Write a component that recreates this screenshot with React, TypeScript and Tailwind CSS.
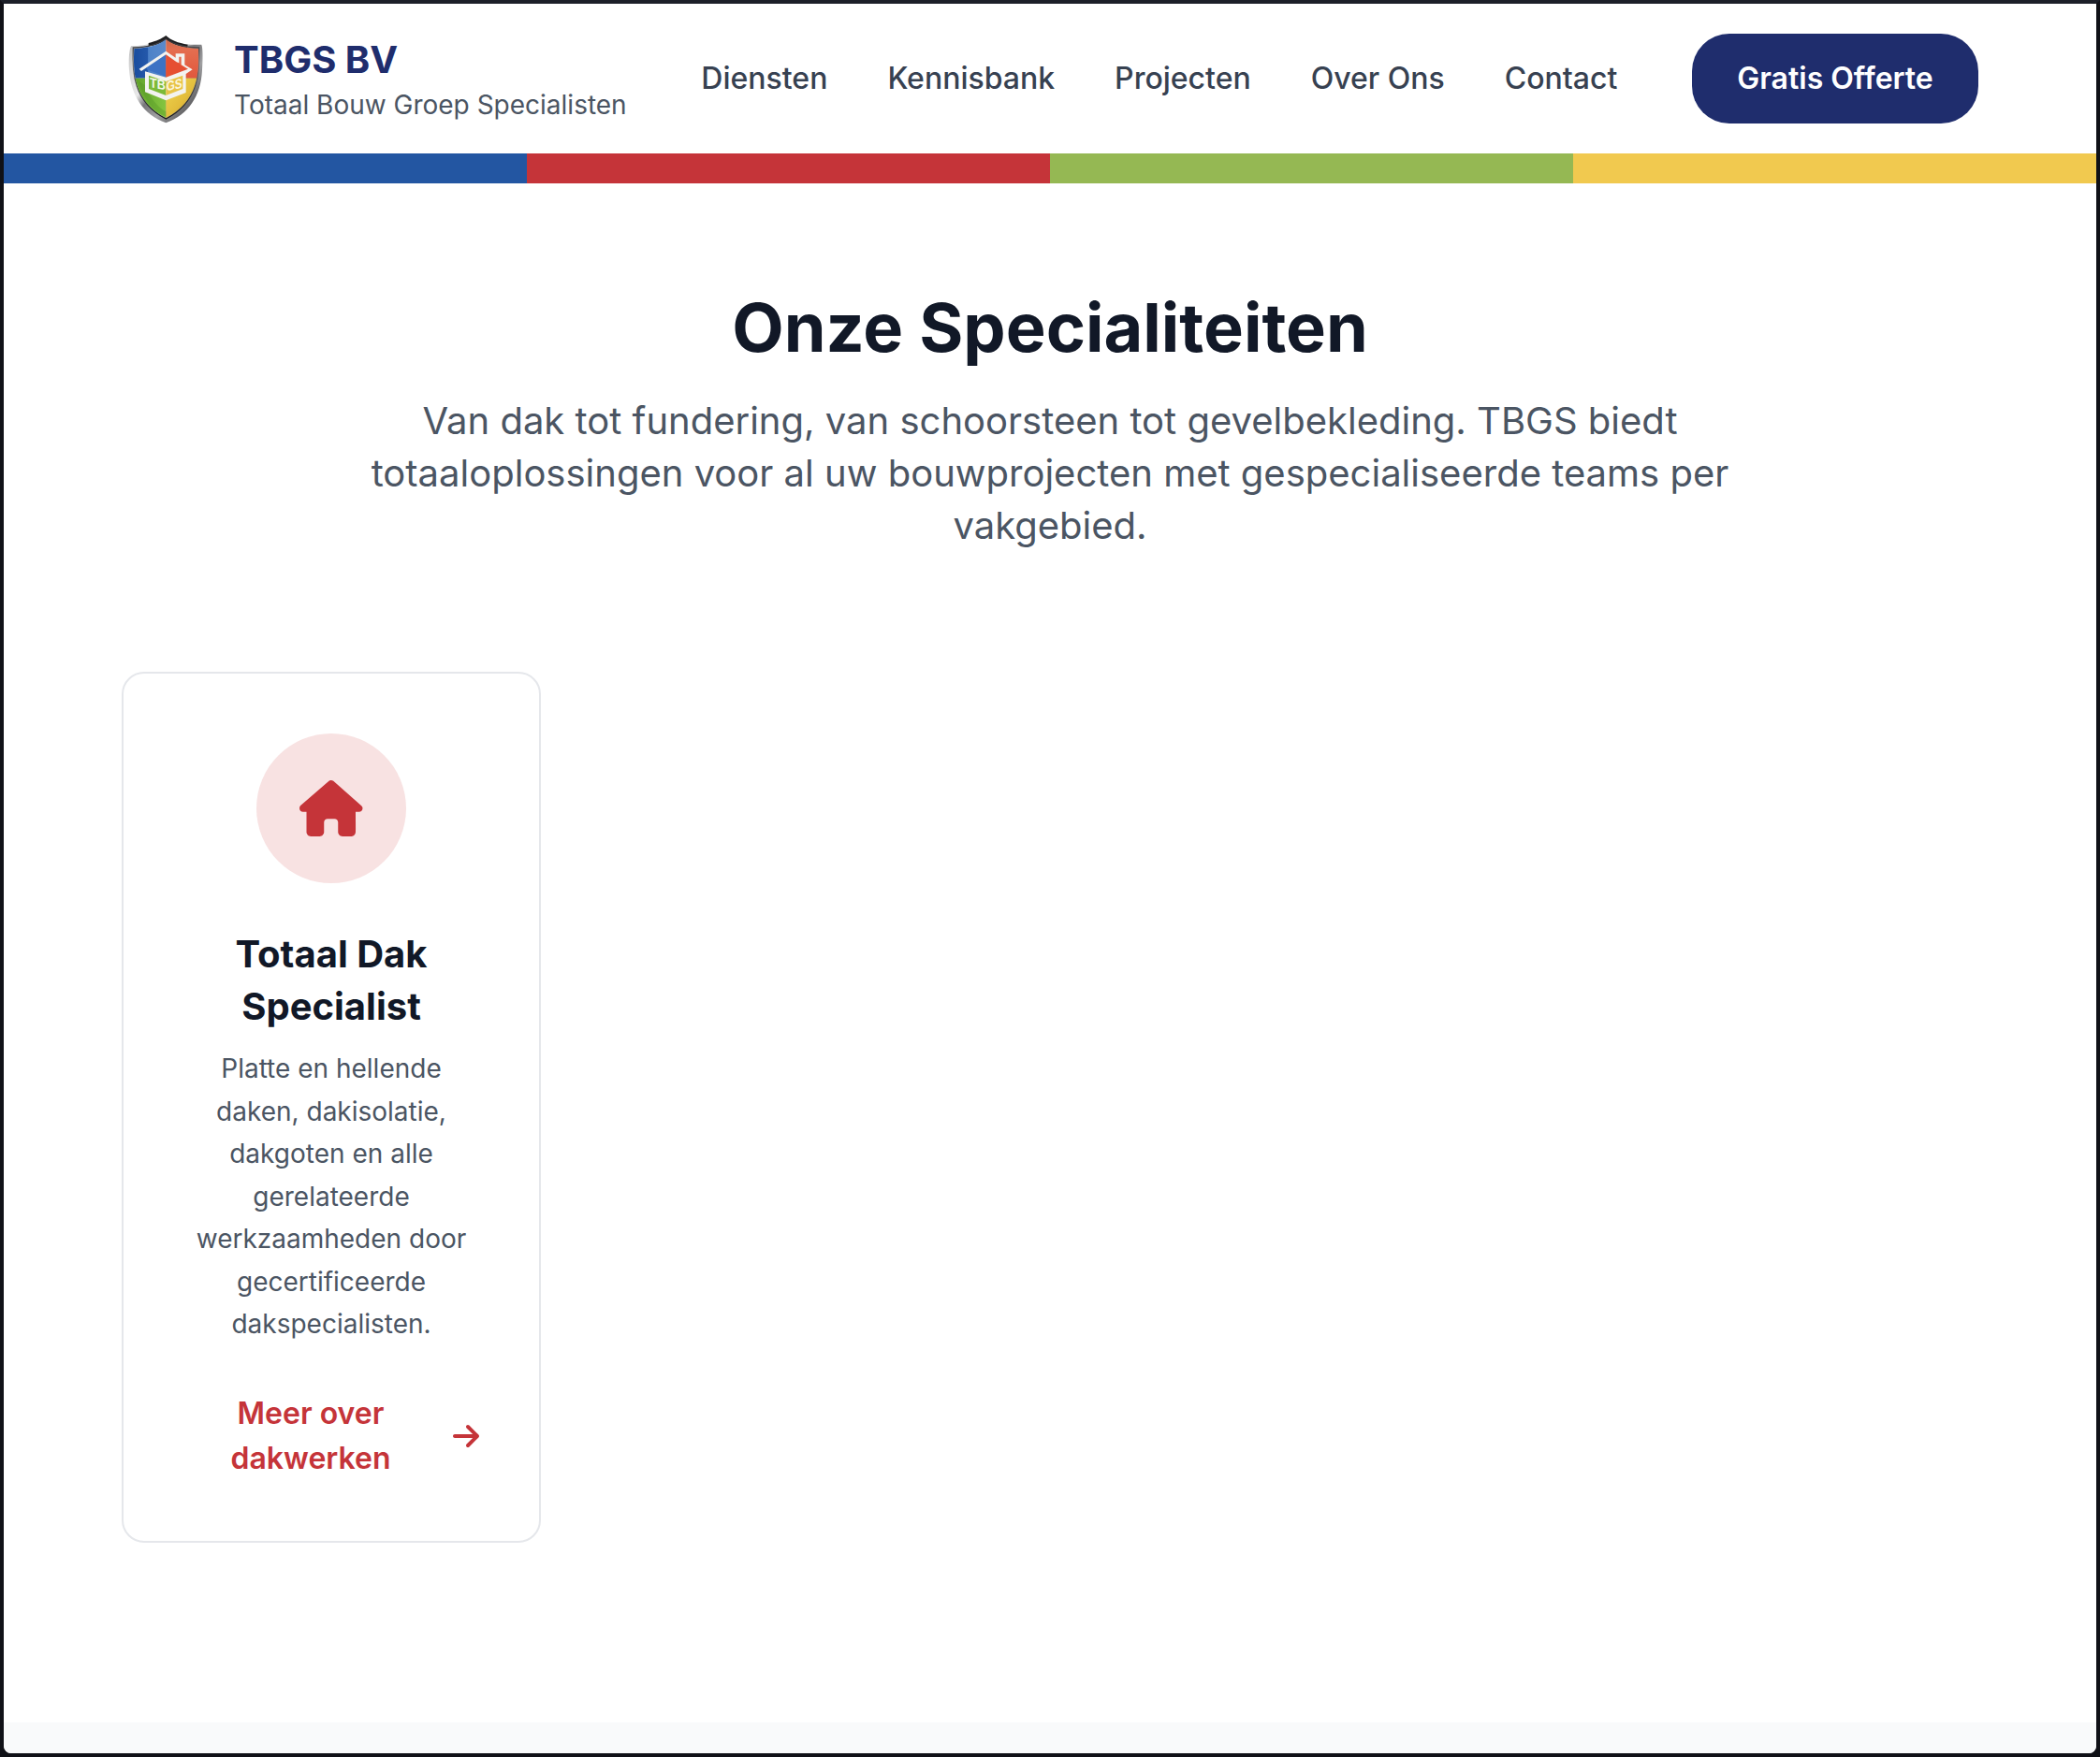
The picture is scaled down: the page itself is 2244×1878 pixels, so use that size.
import { FaArrowRight, FaHouse } from "react-icons/fa6";

const links = ["Diensten", "Kennisbank", "Projecten", "Over Ons", "Contact"];

function Logo() {
  return (
    <svg className="size-24 shrink-0" viewBox="30 48 288 288" aria-label="TBGS">
      <defs>
        <linearGradient id="rim" x1="0" y1="0" x2="1" y2="1">
          <stop offset="0" stopColor="#b4b4b6" />
          <stop offset="0.2" stopColor="#d8d8d8" />
          <stop offset="0.4" stopColor="#e8e8e8" />
          <stop offset="0.5" stopColor="#77777a" />
          <stop offset="0.65" stopColor="#a0a0a2" />
          <stop offset="0.8" stopColor="#6a6a6c" />
          <stop offset="1" stopColor="#3c3c3e" />
        </linearGradient>
        <linearGradient id="inner" x1="0" y1="0" x2="0" y2="1">
          <stop offset="0" stopColor="#2b2b2e" />
          <stop offset="0.3" stopColor="#77777a" />
          <stop offset="0.6" stopColor="#4a4a4d" />
          <stop offset="1" stopColor="#151517" />
        </linearGradient>
        <linearGradient id="blue" x1="0" y1="0" x2="1" y2="0">
          <stop offset="0" stopColor="#174a9c" />
          <stop offset="0.47" stopColor="#2458aa" />
          <stop offset="0.5" stopColor="#4d82c8" />
          <stop offset="1" stopColor="#5a8acb" />
        </linearGradient>
        <linearGradient id="red" x1="0" y1="0" x2="0" y2="1">
          <stop offset="0" stopColor="#c86a4c" />
          <stop offset="0.3" stopColor="#e46e50" />
          <stop offset="1" stopColor="#e2573c" />
        </linearGradient>
        <linearGradient id="green" x1="0" y1="0" x2="1" y2="0">
          <stop offset="0" stopColor="#5b9a26" />
          <stop offset="0.55" stopColor="#72b536" />
          <stop offset="1" stopColor="#86c540" />
        </linearGradient>
        <linearGradient id="yellow" x1="0" y1="0" x2="1" y2="1">
          <stop offset="0" stopColor="#f0d850" />
          <stop offset="0.5" stopColor="#e3bd3c" />
          <stop offset="1" stopColor="#b48a20" />
        </linearGradient>
        <clipPath id="face">
          <path d="M172 66 C195 86 232 94 276 96 C279 170 276 265 172 318 C68 265 66 170 70 96 C112 94 148 86 172 66Z" />
        </clipPath>
      </defs>
      <path
        d="M172 53 C194 76 232 86 286 83 C291 96 290 135 288 165 C284 248 244 308 172 334 C100 308 60 248 54 165 C52 135 54 98 60 88 C112 86 148 76 172 53Z"
        fill="url(#rim)"
      />
      <path
        d="M116 78 C142 72 158 64 172 54 C188 70 210 77 242 83 L240 93 C210 88 190 80 172 68 C156 80 136 86 116 88Z"
        fill="#1d1d1f"
      />
      <path
        d="M172 63 C195 83 232 92 278 93 C282 170 277 267 172 321 C67 267 63 170 67 93 C112 92 148 83 172 63Z"
        fill="none"
        stroke="url(#inner)"
        strokeWidth="4"
      />
      <g clipPath="url(#face)">
        <rect x="60" y="60" width="112" height="131" fill="url(#blue)" />
        <rect x="172" y="60" width="112" height="131" fill="url(#red)" />
        <rect x="60" y="191" width="112" height="135" fill="url(#green)" />
        <rect x="172" y="191" width="112" height="135" fill="url(#yellow)" />
        <path d="M116 140 L172 113 V186 L110 163Z" fill="#3c72c4" />
        <path d="M172 113 L240 163 L172 186Z" fill="#e64f32" />
        <path d="M85 200 C100 255 130 298 172 314 V298 C140 280 120 250 108 215Z" fill="#4c8a20" opacity="0.3" />
      </g>
      <path
        d="M86 161 L172 104 L203 125 V112 H232 V148 L257 163 L236 177 V237 L172 262 L105 235 V169 L172 188 L243 161 L221 148 V122 H214 V142 L206 139 L172 115 L93 168Z"
        fill="#f3f3f0"
        fillRule="evenodd"
      />
      <path d="M117 182 L172 201 V246 L117 225Z" fill="#7cba38" />
      <path d="M172 201 L226 182 V225 L172 246Z" fill="#e8c347" />
      <text transform="matrix(1 .2 0 1 120 219)" textLength="50" lengthAdjust="spacingAndGlyphs" fontFamily="Liberation Sans" fontWeight="700" fontSize="44" fill="#f4f8e8">
        TB
      </text>
      <text transform="matrix(1 -.2 0 1 173 232)" textLength="51" lengthAdjust="spacingAndGlyphs" fontFamily="Liberation Sans" fontWeight="700" fontSize="44" fill="#fbf6dc">
        GS
      </text>
    </svg>
  );
}

function Header() {
  return (
    <header className="h-40 shrink-0 bg-white">
      <div className="mx-auto flex h-full w-[1984px] items-center justify-between">
        <a className="flex items-center gap-6">
          <Logo />
          <div className="flex flex-col">
            <span className="text-[40px] leading-[56px] font-bold text-[#1f2d6d]">TBGS BV</span>
            <span className="text-[28px] leading-10 text-[#4b5563]">Totaal Bouw Groep Specialisten</span>
          </div>
        </a>
        <nav className="flex items-center gap-16">
          {links.map((link) => (
            <a key={link} className="text-[32px] leading-[48px] font-medium text-[#374151]">
              {link}
            </a>
          ))}
        </nav>
        <a className="flex h-24 w-[306px] items-center justify-center rounded-[40px] bg-[#1f2d6d] text-[32px] font-semibold text-white">
          Gratis Offerte
        </a>
      </div>
    </header>
  );
}

function ServiceCard() {
  return (
    <article className="flex flex-col items-center rounded-3xl border-2 border-[#e5e7eb] bg-white p-16 text-center">
      <div className="mb-12 flex size-40 items-center justify-center rounded-full bg-[#f8e2e2] text-[#c53439]">
        <FaHouse className="h-[60px] w-[67.5px]" />
      </div>
      <h3 className="mb-4 text-[40px] leading-[56px] font-bold text-[#111827]">Totaal Dak Specialist</h3>
      <p className="mb-12 text-[28px] leading-[45.5px] text-[#4b5563]">
        Platte en hellende daken, dakisolatie, dakgoten en alle gerelateerde werkzaamheden door gecertificeerde
        dakspecialisten.
      </p>
      <a className="flex w-full items-center gap-4 text-[32px] leading-[48px] font-semibold text-[#c53439]">
        <span className="flex-1">Meer over dakwerken</span>
        <FaArrowRight className="h-8 w-7" />
      </a>
    </article>
  );
}

export default function App() {
  return (
    <div className="h-[1878px] w-[2244px] overflow-hidden border-4 border-[#101117] border-t-[#1c1f29] bg-[#101117] font-['Inter',sans-serif] antialiased">
      <div className="flex h-full flex-col overflow-hidden rounded-b-lg bg-white">
        <Header />
        <div className="grid h-8 shrink-0 grid-cols-4">
          <div className="bg-[#2356a2]" />
          <div className="bg-[#c53439]" />
          <div className="bg-[#95b853]" />
          <div className="bg-[#f1c94f]" />
        </div>
        <section className="shrink-0 bg-white pt-[114px] pb-[192.5px]">
          <div className="mx-auto w-[1984px]">
            <div className="mb-32 text-center">
              <h2 className="mb-8 text-[72px] leading-[80px] font-bold text-[#111827]">Onze Specialiteiten</h2>
              <p className="mx-auto w-[1536px] text-[40px] leading-[56px] text-[#4b5563]">
                Van dak tot fundering, van schoorsteen tot gevelbekleding. TBGS biedt totaaloplossingen voor al uw
                bouwprojecten met gespecialiseerde teams per vakgebied.
              </p>
            </div>
            <div className="grid grid-cols-4 gap-16">
              <ServiceCard />
            </div>
          </div>
        </section>
        <div className="flex-1 bg-[#f9fafb]" />
      </div>
    </div>
  );
}
